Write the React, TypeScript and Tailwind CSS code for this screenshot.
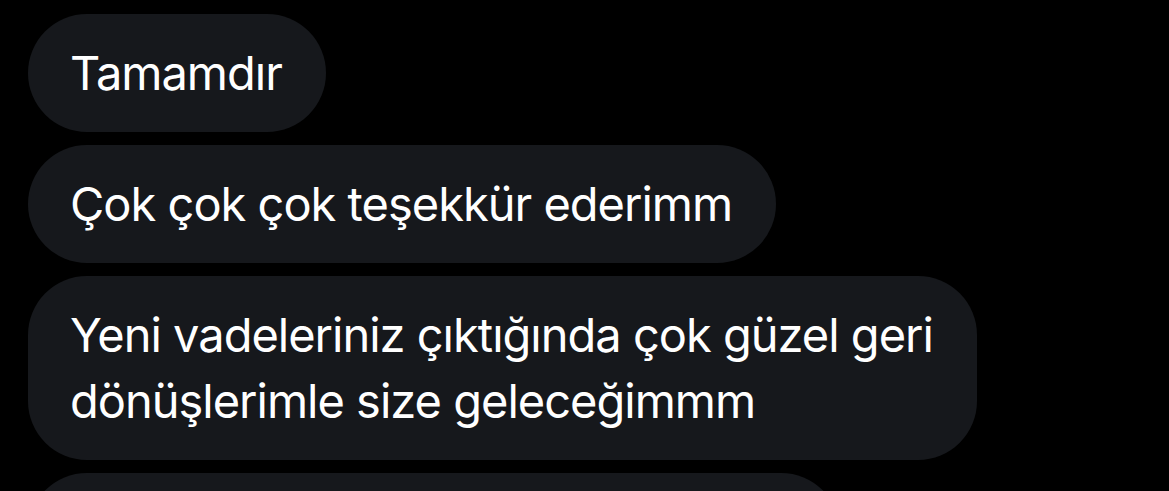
const bubble =
  "rounded-[59px] bg-[#16181c] pl-[42px] pr-[44px] py-[26px] text-[47px] leading-[66px] tracking-[-1px] text-white";

export default function App() {
  return (
    <div
      className="h-screen overflow-hidden bg-black"
      style={{ fontFamily: "Inter, 'Noto Sans', sans-serif" }}
    >
      <div className="flex flex-col items-start gap-[13px] pl-[28px] pt-[14px]">
        <div className={bubble}>Tamamdır</div>
        <div className={bubble}>Çok çok çok teşekkür ederimm</div>
        <div className={bubble}>
          Yeni vadeleriniz çıktığında çok güzel geri
          <br />
          dönüşlerimle size geleceğimmm
        </div>
        <div className="h-[118px] w-[812px] rounded-[59px] bg-[#16181c]" />
      </div>
    </div>
  );
}
